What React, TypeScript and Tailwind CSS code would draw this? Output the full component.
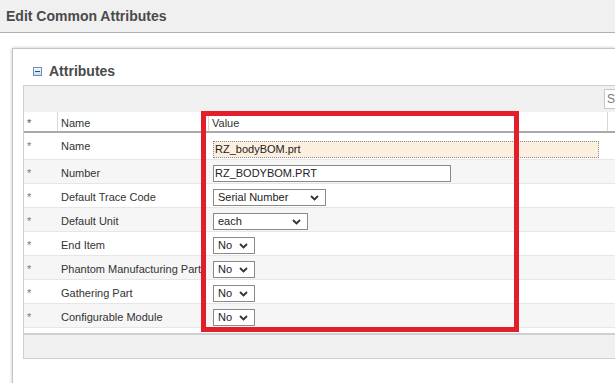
import React from "react";

const Chevron = () => (
  <svg width="9" height="6" viewBox="0 0 9 6" className="shrink-0">
    <path d="M1 1 L4.5 4.5 L8 1" fill="none" stroke="#333" strokeWidth="1.8" />
  </svg>
);

const Select = ({ label, w }: { label: string; w: string }) => (
  <div className={`${w} h-[17px] border border-[#8a8a8a] bg-white flex items-center justify-between pl-[4px] pr-[6px] text-[11px] text-[#222]`}>
    <span>{label}</span>
    <Chevron />
  </div>
);

type Row = { name: string; value: React.ReactNode; h?: string };

export default function App() {
  const rows: Row[] = [
    {
      name: "Name",
      h: "h-[27px]",
      value: (
        <div className="w-[386px] h-[17px] mt-[3px] border border-dotted border-[#8a8a8a] bg-[#fcefdf] flex items-center pl-[1px] text-[11px] text-[#222]">
          RZ_bodyBOM.prt
        </div>
      ),
    },
    {
      name: "Number",
      value: (
        <div className="w-[238px] h-[17px] border border-[#8a8a8a] bg-white flex items-center pl-[1px] text-[11px] text-[#222]">
          RZ_BODYBOM.PRT
        </div>
      ),
    },
    { name: "Default Trace Code", value: <Select label="Serial Number" w="w-[113px]" /> },
    { name: "Default Unit", value: <Select label="each" w="w-[95px]" /> },
    { name: "End Item", value: <Select label="No" w="w-[42px]" /> },
    { name: "Phantom Manufacturing Part", value: <Select label="No" w="w-[42px]" /> },
    { name: "Gathering Part", value: <Select label="No" w="w-[42px]" /> },
    { name: "Configurable Module", value: <Select label="No" w="w-[42px]" /> },
  ];

  return (
    <div
      className="relative w-[615px] h-[383px] overflow-hidden bg-white"
      style={{ fontFamily: '"Liberation Sans", Arial, sans-serif' }}
    >
      {/* Title bar */}
      <div className="h-[33px] bg-[#f0f0f0] border-b border-[#b0b0b0] flex items-center pl-[6px]">
        <span className="text-[14px] font-bold text-[#4a4a4a]">Edit Common Attributes</span>
      </div>

      {/* Panel */}
      <div className="mt-[15px] ml-[12px] h-[400px] border-l border-t border-[#c4c4c4] shadow-[0_0_3px_rgba(0,0,0,0.25)] pl-[10px]">
        <div className="h-[36px] pt-[8px] pl-[10px] flex items-center gap-[7px]">
          <div className="w-[9px] h-[9px] border border-[#6f8fb3] bg-gradient-to-b from-[#f2f7fc] to-[#c9dbee] flex items-center justify-center">
            <div className="w-[5px] h-[1px] bg-[#2d4f7a]" />
          </div>
          <span className="text-[14px] font-bold text-[#4a4a4a]">Attributes</span>
        </div>

        {/* Table */}
        <div className="w-[640px] border-l border-t border-[#cfcfcf] text-[11px] text-[#333]">
          {/* toolbar */}
          <div className="h-[26px] bg-[#f0f0f0] flex items-center">
            <div className="ml-[580px] w-[40px] h-[20px] border border-[#c8c8c8] bg-white flex items-center pl-[2px] text-[12px] text-[#777]">
              S
            </div>
          </div>
          {/* header row */}
          <div className="h-[21px] flex bg-white border-b-2 border-[#a9a9a9]">
            <div className="w-[33px] pl-[3px] pt-[3px] text-[#555]">*</div>
            <div className="w-[151px] border-l border-[#d8d8d8] pl-[3px] pt-[3px]">Name</div>
            <div className="w-[399px] border-l border-[#d8d8d8] pl-[3px] pt-[3px]">Value</div>
            <div className="flex-1 border-l border-[#d8d8d8]" />
          </div>
          {/* body */}
          {rows.map((r, i) => (
            <div
              key={r.name}
              className={`${r.h ?? "h-[24px]"} flex items-center border-b border-[#e6e6e6] ${
                i % 2 === 1 ? "bg-[#f6f6f6]" : "bg-white"
              }`}
            >
              <div className="w-[33px] pl-[3px] text-[#777] self-start pt-[5px]">*</div>
              <div className={`w-[152px] pl-[4px] whitespace-nowrap overflow-hidden self-start ${i === 0 ? "pt-[5px]" : "pt-[5px]"}`}>
                {r.name}
              </div>
              <div className="pl-[4px] self-start pt-[5px]">{r.value}</div>
            </div>
          ))}
          <div className="h-[5px] bg-white" />
          <div className="h-[26px] bg-[#f0f0f0] border-t-2 border-b border-[#cfcfcf]" />
        </div>
      </div>

      {/* Red annotation box */}
      <div className="absolute left-[201px] top-[111px] w-[318px] h-[221px] border-[5px] border-[#e31e2b]" />
    </div>
  );
}
